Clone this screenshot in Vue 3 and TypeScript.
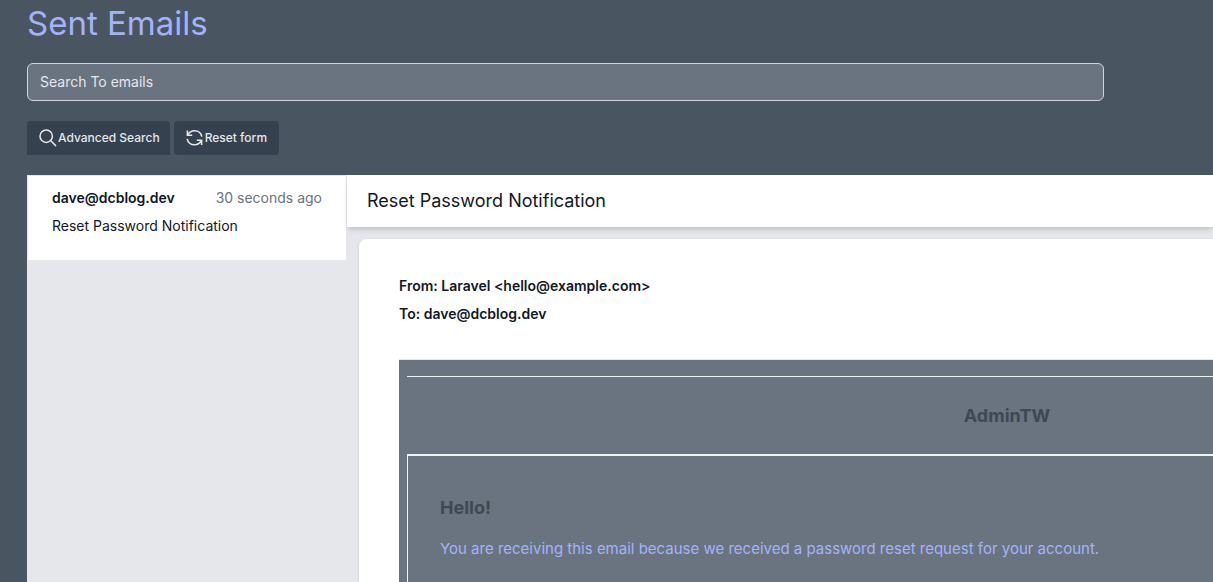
<script setup lang="ts">
import { ref } from 'vue'

interface Email {
  id: number
  from: string
  to: string
  subject: string
  sentAt: string
  brand: string
  greeting: string
  body: string
}

const emails: Email[] = [
  {
    id: 1,
    from: 'Laravel <hello@example.com>',
    to: 'dave@dcblog.dev',
    subject: 'Reset Password Notification',
    sentAt: '30 seconds ago',
    brand: 'AdminTW',
    greeting: 'Hello!',
    body: 'You are receiving this email because we received a password reset request for your account.',
  },
]

const search = ref('')
const selected = ref<Email>(emails[0])

function resetForm(): void {
  search.value = ''
}
</script>

<template>
  <main class="page">
    <h1 class="title">Sent Emails</h1>

    <form class="filters" @submit.prevent>
      <input v-model="search" class="search" type="text" placeholder="Search To emails" aria-label="Search To emails" />
      <div class="actions">
        <button type="button" class="btn btn-tab">
          <svg class="icon" viewBox="0 0 18 18" fill="none" stroke="currentColor" stroke-width="1.5" stroke-linecap="round" aria-hidden="true">
            <circle cx="7.2" cy="7.2" r="6.2" />
            <path d="M11.8 11.8 16.6 16.6" />
          </svg>
          <span>Advanced Search</span>
        </button>
        <button type="button" class="btn" @click="resetForm">
          <svg class="icon" viewBox="0 0 18 18" fill="none" stroke="currentColor" stroke-width="1.6" aria-hidden="true">
            <path d="M1.4 1.5V6.2H6.2" />
            <path d="M1.8 5.9C3.2 3.2 5.6 1.7 8.5 1.7C12.3 1.7 15.2 4.2 15.8 7.6" />
            <path d="M15.6 16V11.3H10.8" />
            <path d="M15.2 11.6C13.8 14.3 11.4 15.8 8.5 15.8C4.7 15.8 1.8 13.3 1.2 9.9" />
          </svg>
          <span>Reset form</span>
        </button>
      </div>
    </form>

    <section class="mailbox">
      <ul class="list">
        <li v-for="email in emails" :key="email.id">
          <button type="button" class="item" @click="selected = email">
            <span class="item-head">
              <strong class="recipient">{{ email.to }}</strong>
              <span class="time">{{ email.sentAt }}</span>
            </span>
            <span class="item-subject">{{ email.subject }}</span>
          </button>
        </li>
      </ul>

      <div class="reader">
        <h2 class="subject">{{ selected.subject }}</h2>
        <article class="card">
          <p class="meta">From: {{ selected.from }}</p>
          <p class="meta">To: {{ selected.to }}</p>
          <div class="message">
            <header class="brand">{{ selected.brand }}</header>
            <div class="content">
              <h3 class="greeting">{{ selected.greeting }}</h3>
              <p class="body-text">{{ selected.body }}</p>
            </div>
          </div>
        </article>
      </div>
    </section>
  </main>
</template>

<style>
body {
  margin: 0;
  background: #4a5562;
}
</style>

<style scoped>
*,
*::before,
*::after {
  box-sizing: border-box;
}

.page {
  display: flex;
  flex-direction: column;
  height: 100vh;
  padding-left: 27px;
  overflow: hidden;
  background: #4a5562;
  color: #111827;
  font-family: Inter, "Liberation Sans", sans-serif;
  font-size: 14px;
  line-height: 20px;
}

h1,
h2,
h3,
p,
ul {
  margin: 0;
  padding: 0;
}

button,
input {
  font-family: inherit;
}

.title {
  padding-top: 3px;
  color: #a3b3fa;
  font-size: 33px;
  font-weight: 400;
  line-height: 40px;
}

.filters {
  display: flex;
  flex-direction: column;
  gap: 20px;
  margin: 20px 109px 20px 0;
}

.search {
  width: 100%;
  height: 38px;
  padding: 7px 12px 9px;
  border: 1px solid #d1d5db;
  border-radius: 6px;
  background: #6a7380;
  color: #e5e7eb;
  font-size: 14px;
  line-height: 20px;
}

.search::placeholder {
  color: #e5e7eb;
  opacity: 1;
}

.actions {
  display: flex;
  gap: 4px;
}

.btn {
  display: flex;
  align-items: center;
  gap: 1px;
  height: 34px;
  padding: 0 12px;
  border: 0;
  border-radius: 4px;
  background: #36414f;
  color: #e5e7eb;
  font-size: 12px;
  font-weight: 500;
  line-height: 16px;
  white-space: nowrap;
}

.btn-tab {
  padding-right: 10px;
  border-radius: 4px 4px 0 0;
}

.icon {
  width: 18px;
  height: 18px;
}

.mailbox {
  display: flex;
  flex: 1;
  min-height: 0;
  overflow: hidden;
  background: #e5e7eb;
}

.list {
  flex: 0 0 320px;
  border: 1px solid #e5e7eb;
  list-style: none;
}

.item {
  display: flex;
  flex-direction: column;
  gap: 8px;
  width: 100%;
  padding: 12px 24px 24px;
  border: 0;
  background: #fff;
  color: #111827;
  font-size: 14px;
  line-height: 20px;
  text-align: left;
}

.item-head {
  display: flex;
  justify-content: space-between;
}

.recipient {
  font-weight: 600;
}

.time {
  color: #6b7280;
}

.reader {
  flex: 1;
  min-width: 0;
}

.subject {
  padding: 12px 20px;
  background: #fff;
  box-shadow: 0 4px 6px -1px rgb(0 0 0 / 10%), 0 2px 4px -1px rgb(0 0 0 / 10%);
  font-size: 18px;
  font-weight: 400;
  line-height: 28px;
}

.card {
  width: max-content;
  margin: 12px;
  padding: 37px 40px;
  border-radius: 8px;
  background: #fff;
  box-shadow: 0 1px 3px rgb(0 0 0 / 10%);
}

.meta {
  margin-bottom: 8px;
  font-weight: 600;
}

.message {
  min-width: 1216px;
  margin-top: 35px;
  padding: 16px 8px;
  border-top: 1px solid #e5e7eb;
  background: #6a7380;
}

.brand {
  padding: 24px 0;
  border-top: 1px solid #edf2f7;
  color: #3d4852;
  font-size: 18px;
  font-weight: 700;
  line-height: 29px;
  text-align: center;
}

.content {
  padding: 40px 32px;
  border: 1px solid #edf2f7;
  border-top-width: 2px;
}

.greeting {
  color: #3d4852;
  font-size: 18px;
  font-weight: 700;
  line-height: 24px;
}

.body-text {
  margin-top: 16px;
  color: #a3b3fa;
  font-size: 15px;
  line-height: 26px;
}
</style>
